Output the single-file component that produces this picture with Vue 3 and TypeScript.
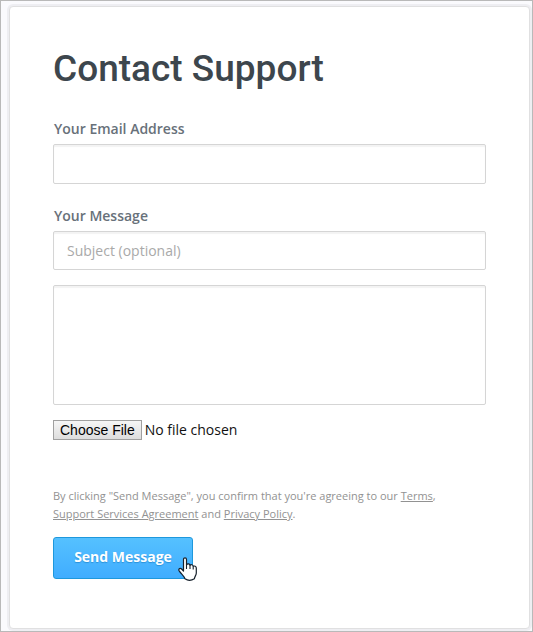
<script setup lang="ts">
import { ref } from 'vue'

const email = ref('')
const subject = ref('')
const message = ref('')
</script>

<template>
  <div class="page">
    <main class="card">
      <h1 class="title">Contact Support</h1>
      <form class="form" @submit.prevent>
        <label class="label" for="email">Your Email Address</label>
        <input id="email" v-model="email" class="field" type="email" />

        <label class="label" for="message">Your Message</label>
        <input
          id="subject"
          v-model="subject"
          class="field subject"
          type="text"
          placeholder="Subject (optional)"
          aria-label="Subject (optional)"
        />
        <textarea id="message" v-model="message" class="field message"></textarea>

        <input class="file" type="file" aria-label="Attachment" />

        <p class="terms">
          By clicking "Send Message", you confirm that you're agreeing to our
          <a href="#terms">Terms</a>,<br />
          <a href="#agreement">Support Services Agreement</a> and
          <a href="#privacy">Privacy Policy</a>.
        </p>

        <div class="actions">
          <button class="send" type="submit">Send Message</button>
          <svg class="pointer" width="20" height="24" viewBox="0 0 20 24" aria-hidden="true">
            <path
              d="M5.5 14V2.5C5.5 .2 8.5 .2 8.5 2.5V8C9.2 6.4 11.8 6.6 12 8.4C12.8 7.2 15 7.6 15.2 9.3C16.4 8.6 18.3 9.2 18.3 11V16C18.3 18.3 16.6 19.3 16.4 21.8C13.5 23.5 9.5 23.5 7 21.8C6.6 19.3 3.2 17 1 13.6C.2 11.7 2.4 10.7 3.6 12L5.5 14Z"
              fill="#fff"
              stroke="#16202b"
              stroke-width="1.2"
              stroke-linejoin="round"
            />
            <path d="M8.5 8V12M12 8.4V12M15.2 9.3V12.5" fill="none" stroke="#16202b" stroke-width="1.1" />
          </svg>
        </div>
      </form>
    </main>
  </div>
</template>

<style>
body {
  margin: 0;
}
</style>

<style scoped>
.page {
  box-sizing: border-box;
  display: flex;
  min-height: 100vh;
  padding: 5px 2px 2px 8px;
  border: 1px solid #b9b9b9;
  background: #fafafd;
  font-family: "Open Sans", "Noto Sans", sans-serif;
}

.card {
  box-sizing: border-box;
  flex: 1;
  min-width: 0;
  padding: 37px 43px 48px;
  border: 1px solid #e0e0e1;
  border-radius: 4px;
  background: #fff;
  box-shadow: 0 0 0 2px #eeeef2;
}

.title {
  margin: 0;
  color: #3d464d;
  font: 500 37px/50px Roboto, sans-serif;
}

.form {
  display: flex;
  flex-direction: column;
  margin-top: 25px;
}

.label {
  margin-bottom: 5px;
  padding-left: 1px;
  color: #68717a;
  font-size: 14px;
  font-weight: 600;
  line-height: 20px;
}

.field {
  box-sizing: border-box;
  width: 100%;
  height: 40px;
  margin: 0 0 22px;
  padding: 0 13px;
  border: 1px solid #d5d5d5;
  border-radius: 2px;
  outline: none;
  background: #fff;
  box-shadow: inset 0 2px 1px #f3f3f3;
  color: #3d464d;
  font: 14px/20px "Open Sans", "Noto Sans", sans-serif;
}

.field::placeholder {
  color: #a9a9a9;
  opacity: 1;
}

.subject {
  height: 39px;
  margin-bottom: 15px;
}

.message {
  height: 120px;
  margin-bottom: 15px;
  padding: 10px 13px;
  resize: none;
}

.file {
  width: 100%;
  height: 20px;
  color: #111;
  font: 14px/20px "Open Sans", "Noto Sans", sans-serif;
}

.file::file-selector-button {
  box-sizing: border-box;
  height: 20px;
  margin: 0 3px 0 0;
  padding: 0 6px;
  border: 1px solid #a0a0a0;
  border-radius: 0;
  background: linear-gradient(#f6f6f6, #dddddd);
  color: #000;
  font: 14px/18px "Liberation Sans", sans-serif;
}

.terms {
  margin: 47px 0 14px;
  color: #929292;
  font-size: 11px;
  line-height: 18px;
}

.terms a {
  color: inherit;
  text-decoration: underline;
}

.actions {
  position: relative;
  align-self: flex-start;
}

.send {
  display: block;
  box-sizing: border-box;
  width: 140px;
  height: 42px;
  padding: 0 0 2px;
  border: 1px solid #1e98dc;
  border-radius: 3px;
  background: linear-gradient(#55c1ff, #40adff);
  color: #fff;
  font: 700 14px/20px "Open Sans", "Noto Sans", sans-serif;
  text-shadow: 0 1px 1px #2b91d8;
  cursor: pointer;
}

.pointer {
  position: absolute;
  top: 20px;
  left: 125px;
  pointer-events: none;
}
</style>
